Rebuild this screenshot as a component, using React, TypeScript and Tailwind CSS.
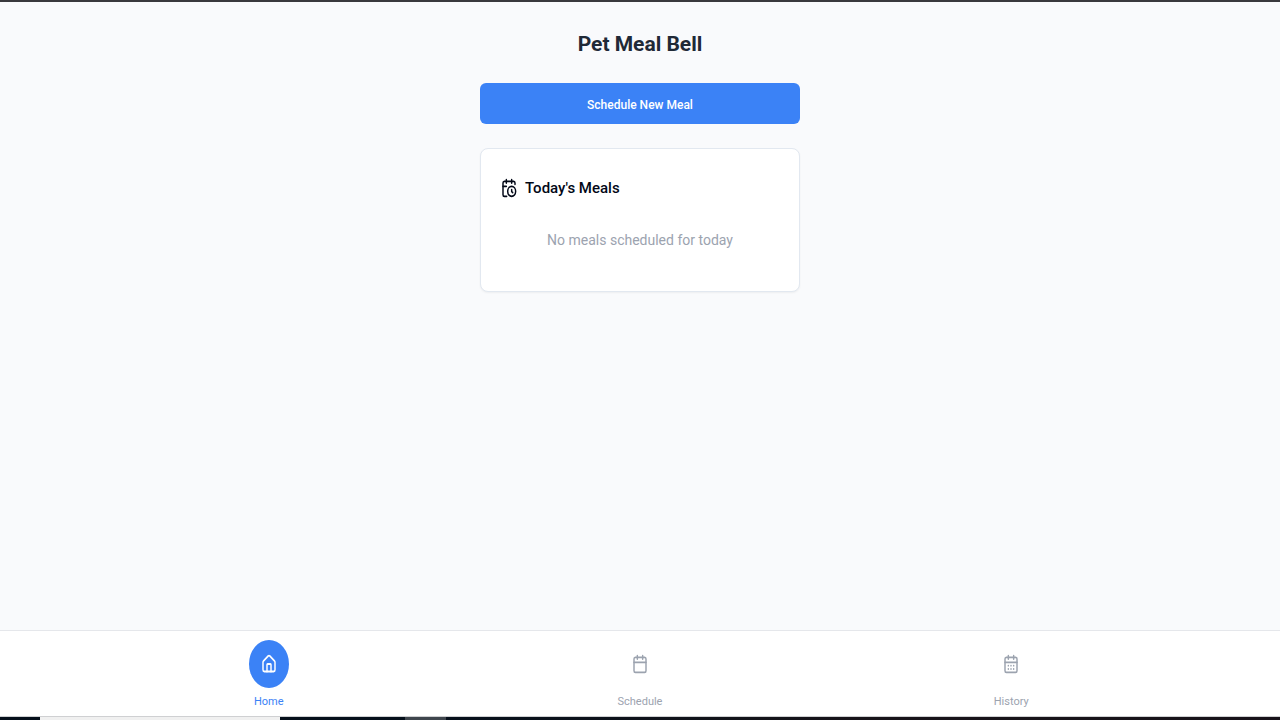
import type { ReactNode } from "react";

function Icon({ children }: { children: ReactNode }) {
  return (
    <svg
      viewBox="0 0 24 24"
      preserveAspectRatio="none"
      className="h-5 w-4 shrink-0"
      fill="none"
      stroke="currentColor"
      strokeWidth="2.2"
      strokeLinecap="round"
      strokeLinejoin="round"
      aria-hidden="true"
    >
      {children}
    </svg>
  );
}

function CalendarClockIcon() {
  return (
    <Icon>
      <path d="M21 7.5V6a2 2 0 0 0-2-2H5a2 2 0 0 0-2 2v14a2 2 0 0 0 2 2h3.5" />
      <path d="M16 2v4M8 2v4M3 10h5" />
      <path d="M17.5 17.5 16 16.3V14" />
      <circle cx="16" cy="16" r="6" />
    </Icon>
  );
}

function HomeIcon() {
  return (
    <Icon>
      <path d="M15 21v-8a1 1 0 0 0-1-1h-4a1 1 0 0 0-1 1v8" />
      <path d="M3 10a2 2 0 0 1 .709-1.528l7-5.999a2 2 0 0 1 2.582 0l7 5.999A2 2 0 0 1 21 10v9a2 2 0 0 1-2 2H5a2 2 0 0 1-2-2z" />
    </Icon>
  );
}

function CalendarIcon({ days = false }: { days?: boolean }) {
  return (
    <Icon>
      <path d="M8 2v4M16 2v4M3 10h18" />
      <rect width="18" height="18" x="3" y="4" rx="2" />
      {days && (
        <path d="M8 14h.01M12 14h.01M16 14h.01M8 18h.01M12 18h.01M16 18h.01" />
      )}
    </Icon>
  );
}

function NavItem({ label, icon, active = false }: { label: string; icon: ReactNode; active?: boolean }) {
  return (
    <a
      href={"#" + label.toLowerCase()}
      aria-current={active ? "page" : undefined}
      className={active ? "flex flex-col items-center gap-1.5 text-[#3b82f6]" : "flex flex-col items-center gap-1.5 text-[#9ca3af]"}
    >
      <span
        className={
          active
            ? "flex h-12 w-10 items-center justify-center rounded-[50%] bg-[#3b82f6] text-white"
            : "flex h-12 w-10 items-center justify-center"
        }
      >
        {icon}
      </span>
      <span className="text-[11px] leading-4">{label}</span>
    </a>
  );
}

export default function App() {
  return (
    <div className="flex min-h-screen flex-col border-t-2 border-[#39393d] bg-[#f9fafc] font-['Roboto','Noto_Sans',sans-serif]">
      <main className="mx-auto flex w-full max-w-80 grow flex-col pt-6">
        <h1 className="text-center text-[21px] leading-9 font-bold text-[#1f2937]">Pet Meal Bell</h1>
        <button
          type="button"
          className="mt-[21px] h-[41px] w-full rounded-md bg-[#3b82f6] pt-0.5 text-[12px] font-medium text-white"
        >
          Schedule New Meal
        </button>
        <section className="mt-6 flex h-36 flex-col rounded-lg border border-[#e2e8f0] bg-white px-5 pt-[23px] shadow-xs">
          <h2 className="flex items-center gap-2 text-[15px] leading-8 font-medium text-[#020817]">
            <CalendarClockIcon />
            Today's Meals
          </h2>
          <p className="mt-5 text-center text-[14px] leading-8 text-[#9ca3af]">No meals scheduled for today</p>
        </section>
      </main>
      <nav className="border-t border-[#e5e7eb] bg-white px-[6.5%] pt-[9px] pb-1.5">
        <div className="grid grid-cols-3">
          <NavItem label="Home" icon={<HomeIcon />} active />
          <NavItem label="Schedule" icon={<CalendarIcon />} />
          <NavItem label="History" icon={<CalendarIcon days />} />
        </div>
      </nav>
      <div className="flex h-1 border-t border-[#cfd0d2] bg-[#06101b]">
        <div className="w-10" />
        <div className="w-60 bg-[#f0f0f0]" />
        <div className="w-[125px]" />
        <div className="w-[41px] bg-[#3f464d]" />
        <div className="grow bg-linear-to-r from-[#06101b] via-[#17141a] to-[#17121a]" />
      </div>
    </div>
  );
}
